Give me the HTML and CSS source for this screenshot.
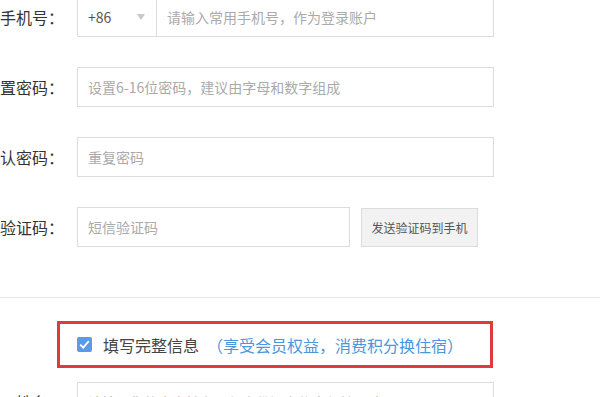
FILE: index.html
```html
<!DOCTYPE html>
<html lang="zh-CN">
<head>
<meta charset="utf-8">
<title>注册</title>
<link rel="stylesheet" href="styles.css">
</head>
<body>
<div class="form">
  <div class="row">
    <div class="label">手机号：</div>
    <div class="field phone">
      <div class="code"><span>+86</span><span class="arrow"></span></div>
      <div class="ph">请输入常用手机号，作为登录账户</div>
    </div>
  </div>
  <div class="row">
    <div class="label">设置密码：</div>
    <div class="field"><div class="ph">设置6-16位密码，建议由字母和数字组成</div></div>
  </div>
  <div class="row">
    <div class="label">确认密码：</div>
    <div class="field"><div class="ph">重复密码</div></div>
  </div>
  <div class="row">
    <div class="label">短信验证码：</div>
    <div class="field sms"><div class="ph">短信验证码</div></div>
    <div class="send">发送验证码到手机</div>
  </div>
  <div class="divider"></div>
  <div class="full">
    <span class="check"><svg width="15" height="15" viewBox="0 0 15 15"><rect x="0" y="0" width="15" height="15" rx="2" fill="#5b9ae6"/><path d="M3.2 7.6 L6.2 10.6 L11.8 4.2" fill="none" stroke="#fff" stroke-width="1.8"/></svg></span>
    <span class="full-title">填写完整信息</span>
    <span class="full-note">（享受会员权益，消费积分换住宿）</span>
  </div>
  <div class="row last">
    <div class="label">姓名：</div>
    <div class="field"><div class="ph">请填写您的真实姓名，与身份证上信息保持一致</div></div>
  </div>
</div>
</body>
</html>
```

FILE: styles.css
```css
html, body {
  margin: 0;
  padding: 0;
  background: #fff;
  overflow: hidden;
}
body {
  width: 600px;
  height: 397px;
  font-family: "Noto Sans CJK SC", "Microsoft YaHei", sans-serif;
}
.form {
  margin-top: -3px;
}
.row {
  display: flex;
  align-items: center;
  height: 40px;
  margin-bottom: 30px;
}
.label {
  width: 64px;
  flex: none;
  display: flex;
  justify-content: flex-end;
  white-space: nowrap;
  font-size: 16px;
  color: #333;
  margin-right: 13px;
}
.field {
  box-sizing: border-box;
  width: 417px;
  height: 40px;
  border: 1px solid #dcdcdc;
  display: flex;
  align-items: center;
}
.ph {
  padding-left: 10px;
  font-size: 14px;
  color: #aaa;
  white-space: nowrap;
}
.code {
  box-sizing: border-box;
  width: 79px;
  height: 100%;
  border-right: 1px solid #dcdcdc;
  display: flex;
  align-items: center;
  justify-content: space-between;
  padding: 0 10px 0 10px;
  font-size: 14px;
  color: #555;
}
.arrow {
  width: 0;
  height: 0;
  border-left: 4px solid transparent;
  border-right: 4px solid transparent;
  border-top: 6px solid #c8c8c8;
  margin-right: 1px;
}
.sms {
  width: 273px;
}
.send {
  box-sizing: border-box;
  width: 117px;
  height: 39px;
  margin-left: 11px;
  background: #f2f2f2;
  border: 1px solid #dcdcdc;
  display: flex;
  align-items: center;
  justify-content: center;
  font-size: 12px;
  color: #555;
}
.divider {
  height: 1px;
  background: #e6e6e6;
  margin-top: 50px;
}
.full {
  box-sizing: border-box;
  margin: 23px 0 14px 57px;
  width: 436px;
  height: 47px;
  border: 3px solid #e03a3e;
  display: flex;
  align-items: center;
  padding-left: 17px;
  font-size: 16px;
  white-space: nowrap;
}
.check {
  display: flex;
  width: 15px;
  height: 15px;
  margin-right: 11px;
}
.full-title {
  color: #444;
}
.full-note {
  color: #4a97e0;
  margin-left: 8px;
}
.last {
  margin-bottom: 0;
}
```
